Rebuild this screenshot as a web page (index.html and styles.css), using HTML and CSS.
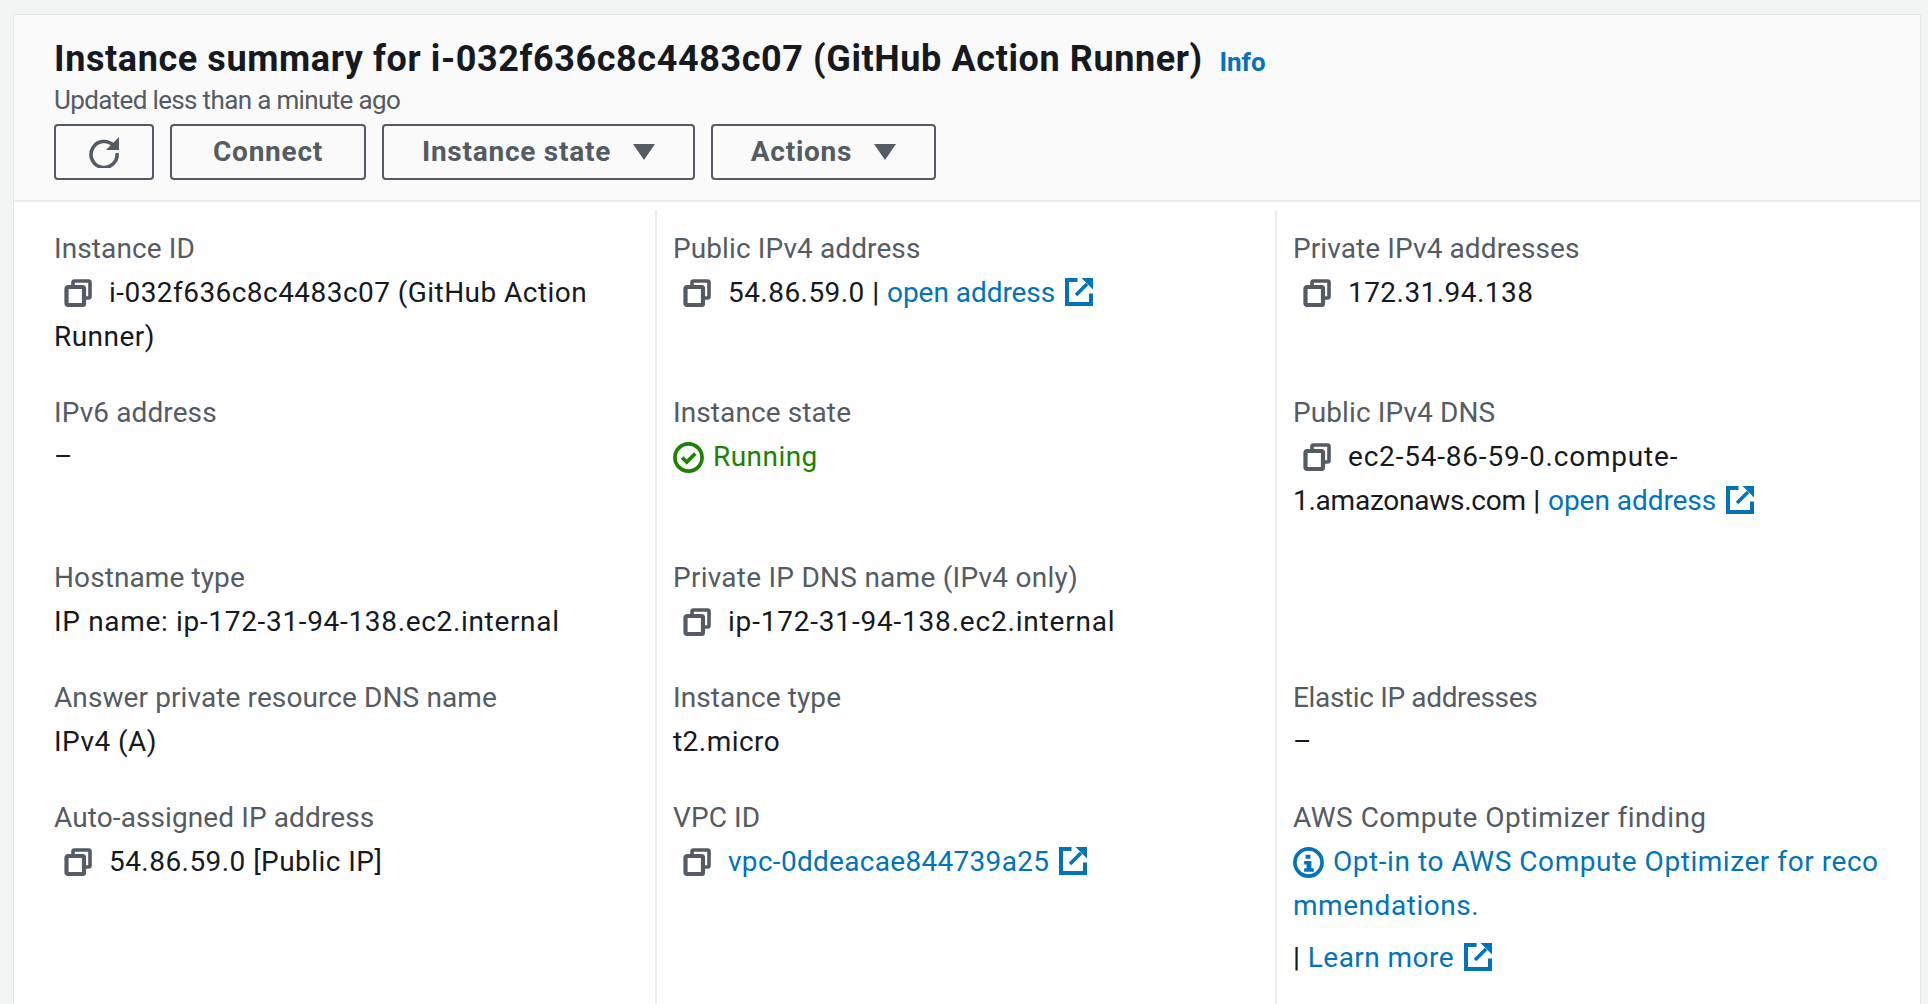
FILE: index.html
```html
<!DOCTYPE html>
<html lang="en">
<head>
<meta charset="utf-8">
<title>Instance summary</title>
<link rel="stylesheet" href="styles.css">
</head>
<body>
<svg class="defs" width="0" height="0" aria-hidden="true">
  <symbol id="copy" viewBox="0 0 28 28"><path d="M9 7V3.500A1.500 1.500 0 0 1 10.500 2h14A1.500 1.500 0 0 1 26 3.500v14a1.500 1.500 0 0 1-1.500 1.500H22" fill="none" stroke="currentColor" stroke-width="3.600"/><rect x="2.500" y="8" width="17.500" height="18" rx="1.500" fill="none" stroke="currentColor" stroke-width="4.200"/></symbol>
  <symbol id="ext" viewBox="0 0 28 28"><path d="M12.500 2H2v24h24V15.500" fill="none" stroke="currentColor" stroke-width="4"/><path d="M16.500 0H28v11.500z" fill="currentColor"/><path d="M22 6 11 17" fill="none" stroke="currentColor" stroke-width="3.600"/></symbol>
</svg>
<main class="card">
  <header class="head">
    <h1 class="title">Instance summary for i-032f636c8c4483c07 (GitHub Action Runner) <a class="info">Info</a></h1>
    <p class="updated">Updated less than a minute ago</p>
    <div class="actions">
      <button class="btn btn-icon"><svg class="refresh" viewBox="0 0 32 32"><path d="M25.500 9.500A13 13 0 1 0 29 17" fill="none" stroke="currentColor" stroke-width="3.600"/><path d="M31 1v13H18z" fill="currentColor"/></svg></button>
      <button class="btn btn-connect">Connect</button>
      <button class="btn btn-state">Instance state<i class="caret"></i></button>
      <button class="btn btn-actions">Actions<i class="caret"></i></button>
    </div>
  </header>
  <section class="grid">
    <div class="cell"><div class="label">Instance ID</div><div class="val"><svg class="copy"><use href="#copy"/></svg>i-032f636c8c4483c07 (GitHub Action<br>Runner)</div></div>
    <div class="cell"><div class="label">Public IPv4 address</div><div class="val"><svg class="copy"><use href="#copy"/></svg>54.86.59.0 <span class="sep">|</span> <a class="addr">open address<svg class="ext"><use href="#ext"/></svg></a></div></div>
    <div class="cell"><div class="label">Private IPv4 addresses</div><div class="val"><svg class="copy"><use href="#copy"/></svg>172.31.94.138</div></div>

    <div class="cell"><div class="label">IPv6 address</div><div class="val">–</div></div>
    <div class="cell"><div class="label">Instance state</div><div class="val running"><svg class="status" viewBox="0 0 32 32"><circle cx="16" cy="16" r="14" fill="none" stroke="currentColor" stroke-width="3.800"/><path d="M9.500 16l4.700 4.700 8.800-8.800" fill="none" stroke="currentColor" stroke-width="3.800"/></svg>Running</div></div>
    <div class="cell"><div class="label">Public IPv4 DNS</div><div class="val"><svg class="copy"><use href="#copy"/></svg><span class="wide">ec2-54-86-59-0.compute-</span><br><span class="tight">1.amazonaws.com</span> <span class="sep">|</span> <a class="addr">open address<svg class="ext"><use href="#ext"/></svg></a></div></div>

    <div class="cell"><div class="label">Hostname type</div><div class="val host">IP name: ip-172-31-94-138.ec2.internal</div></div>
    <div class="cell"><div class="label label-wide">Private IP DNS name (IPv4 only)</div><div class="val"><svg class="copy"><use href="#copy"/></svg><span class="wide">ip-172-31-94-138.ec2.internal</span></div></div>
    <div class="cell"></div>

    <div class="cell"><div class="label">Answer private resource DNS name</div><div class="val">IPv4 (A)</div></div>
    <div class="cell"><div class="label">Instance type</div><div class="val">t2.micro</div></div>
    <div class="cell"><div class="label label-tight">Elastic IP addresses</div><div class="val">–</div></div>

    <div class="cell"><div class="label">Auto-assigned IP address</div><div class="val"><svg class="copy"><use href="#copy"/></svg>54.86.59.0 [Public IP]</div></div>
    <div class="cell"><div class="label">VPC ID</div><div class="val"><svg class="copy"><use href="#copy"/></svg><a class="vpc">vpc-0ddeacae844739a25<svg class="ext"><use href="#ext"/></svg></a></div></div>
    <div class="cell"><div class="label label-aws">AWS Compute Optimizer finding</div><div class="val opt"><a><svg class="status" viewBox="0 0 32 32"><circle cx="16" cy="16" r="14" fill="none" stroke="currentColor" stroke-width="3.800"/><path d="M13 8h5v4h-5zM11.500 14.500H19V22h2.500v3.500h-10V22H14v-4h-2.500z" fill="currentColor"/></svg>Opt-in to AWS Compute Optimizer for reco<br>mmendations.</a></div><div class="val more"><span class="sep">|</span> <a>Learn more<svg class="ext"><use href="#ext"/></svg></a></div></div>
  </section>
</main>
</body>
</html>
```

FILE: styles.css
```css
html, body { margin: 0; height: 1004px; overflow: hidden; }
body { background: #f2f3f3; font-family: Roboto, "Liberation Sans", sans-serif; color: #16191f; }
.defs { position: absolute; }
.card { margin: 15px 8px 0 14px; height: 989px; background: #fff; box-shadow: 0 0 0 1px #e4e7e7; }
.head { height: 187px; box-sizing: border-box; padding: 22px 40px 0; background: #fafafa; border-bottom: 2px solid #eaeded; }
.title { margin: 0; font-size: 36px; line-height: 44px; font-weight: 700; letter-spacing: .6px; white-space: nowrap; }
.info { margin-left: 7px; font-size: 26px; letter-spacing: 0; color: #0073bb; }
.updated { margin: -3px 0 5px; font-size: 26px; line-height: 38px; letter-spacing: -.65px; color: #545b64; }
.actions { display: flex; gap: 16px; }
.btn { display: flex; align-items: center; justify-content: center; height: 56px; box-sizing: border-box; padding: 0; background: transparent; border: 2px solid #545b64; border-radius: 4px; color: #545b64; font: 700 28px/1 Roboto, sans-serif; letter-spacing: .75px; }
.btn-icon { width: 100px; }
.btn-connect { width: 196px; }
.btn-state { width: 313px; }
.btn-actions { width: 225px; }
.refresh { width: 32px; height: 32px; }
.caret { width: 0; height: 0; margin-left: 22px; border-left: 11px solid transparent; border-right: 11px solid transparent; border-top: 16px solid #545b64; }
.grid { display: grid; grid-template-columns: 601px 620px 1fr; margin: 8px 0 0 40px; }
.cell { padding: 0 0 32.300px 16px; min-height: 88px; border-left: 2px solid #eaeded; }
.cell:nth-child(3n+1) { padding-left: 0; border-left: 0; }
.cell:nth-child(-n+3) { padding-top: 17px; }
.label { font-size: 28px; line-height: 44px; letter-spacing: .1px; color: #545b64; white-space: nowrap; }
.label-wide { letter-spacing: .25px; }
.label-tight { letter-spacing: -.35px; }
.label-aws { letter-spacing: .48px; }
.val { font-size: 28px; line-height: 44px; letter-spacing: .45px; white-space: nowrap; }
.val a { color: #0073bb; }
.addr { letter-spacing: -.05px; }
.vpc { letter-spacing: .3px; }
.wide { letter-spacing: .8px; }
.tight { letter-spacing: -.25px; }
.host { letter-spacing: .67px; }
.opt { letter-spacing: .55px; }
.sep { font-weight: 500; }
.copy { width: 28px; height: 28px; margin: 0 17px 0 10px; vertical-align: -5px; color: #545b64; }
.ext { width: 28px; height: 28px; margin-left: 10px; vertical-align: -4px; color: #0073bb; }
.status { width: 31px; height: 31px; margin-right: 9px; vertical-align: -7px; }
.running { color: #1d8102; }
.more { margin-top: 8px; }
```
